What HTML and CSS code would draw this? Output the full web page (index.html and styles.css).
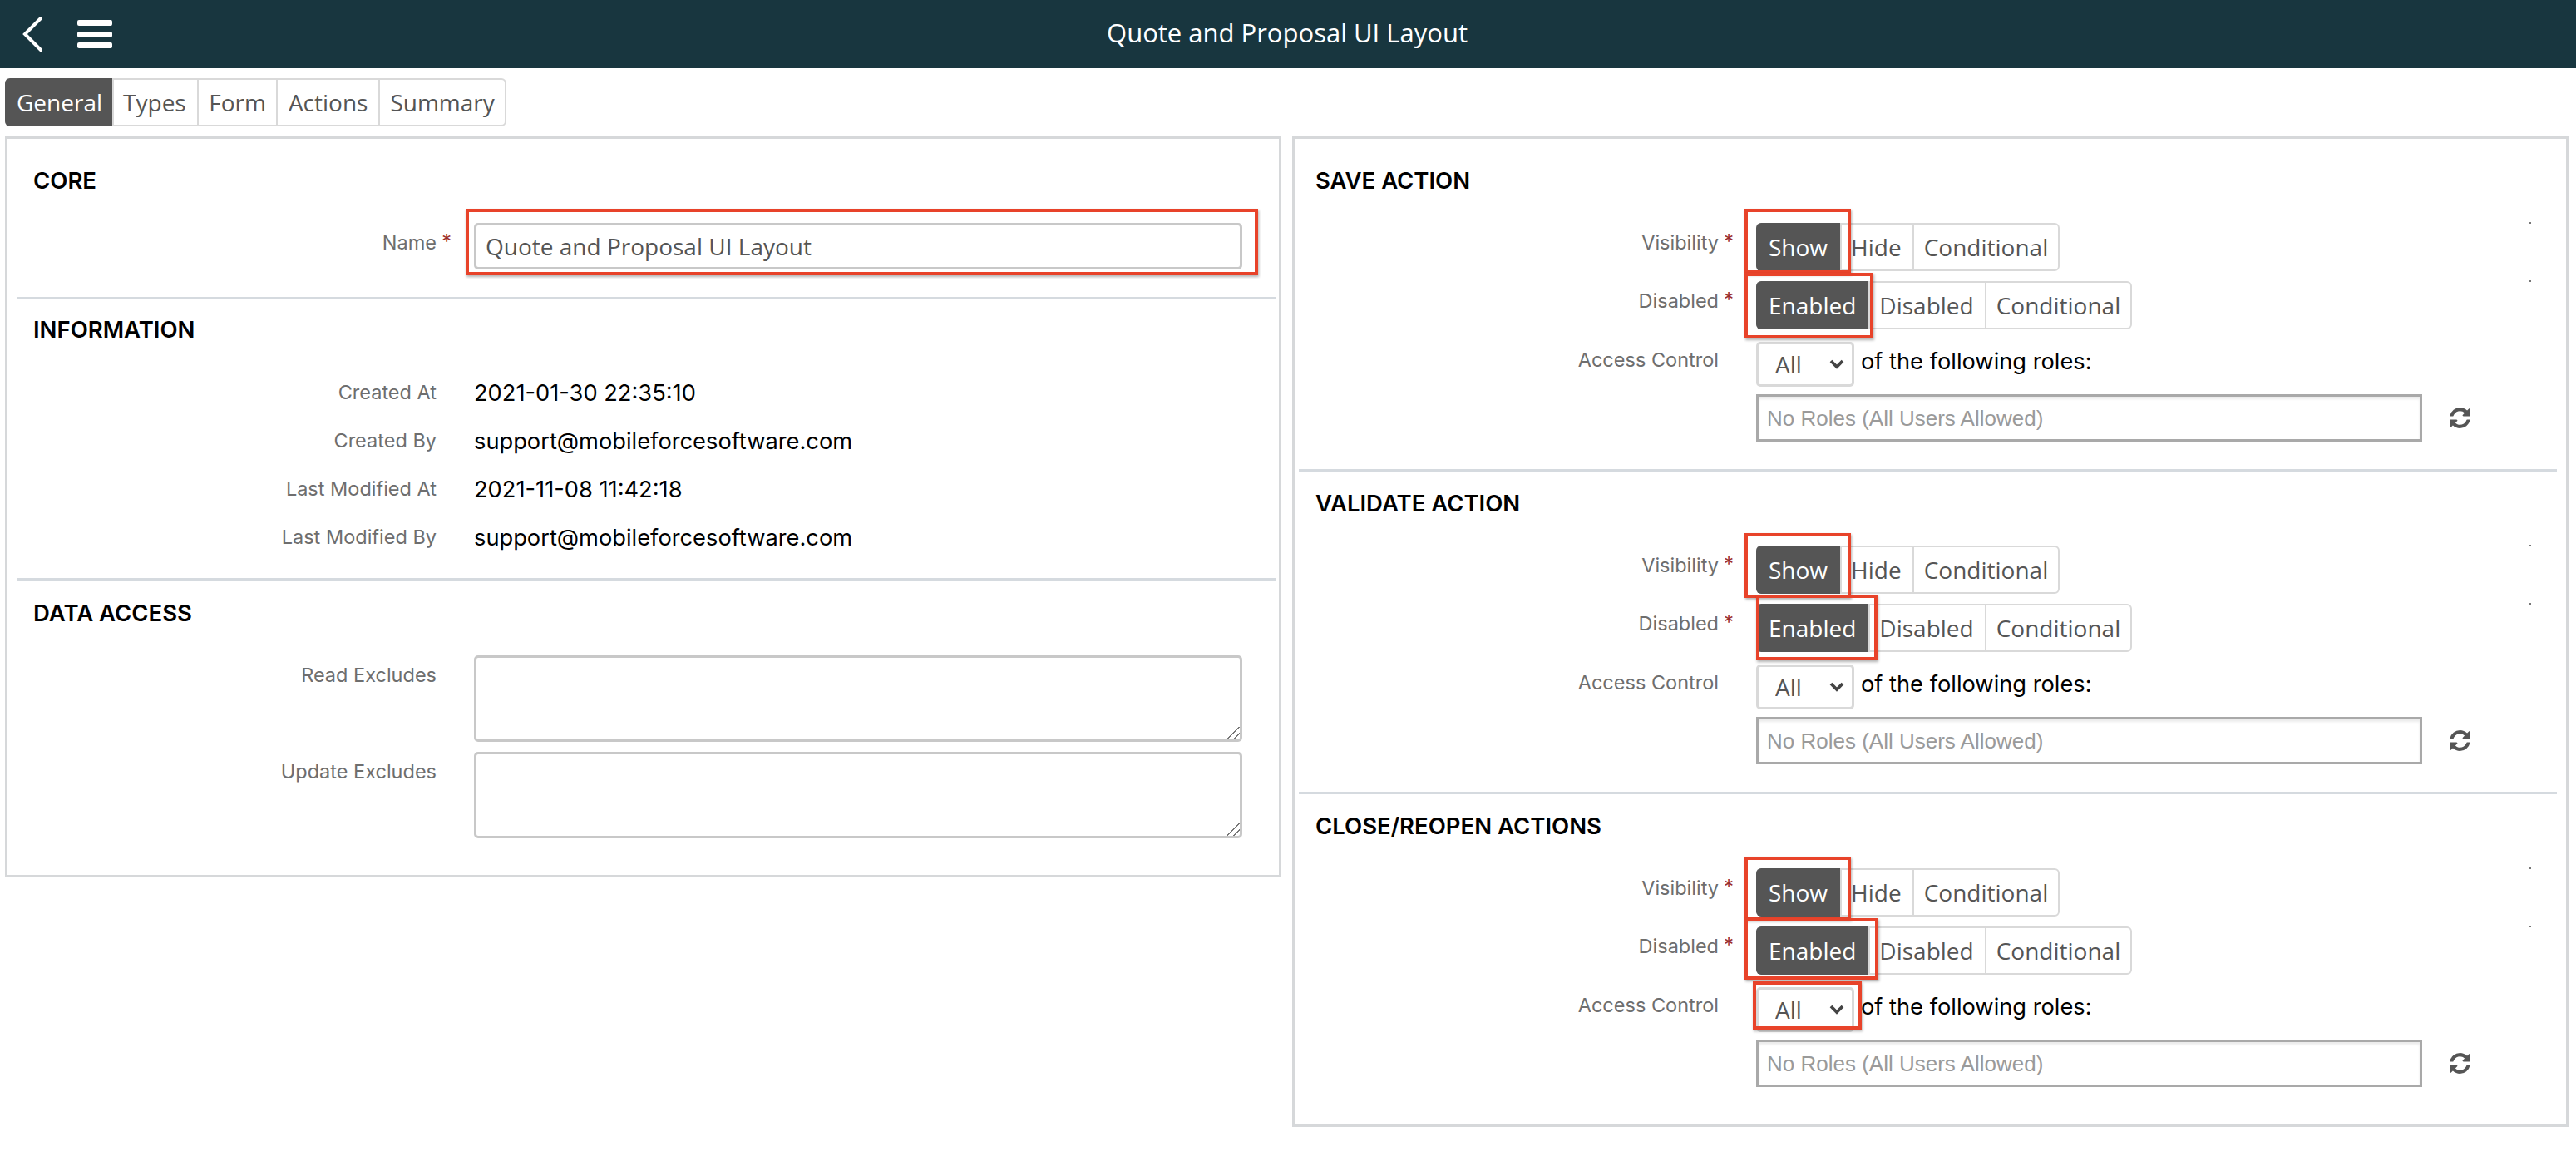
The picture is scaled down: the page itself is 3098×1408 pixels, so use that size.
FILE: index.html
```html
<!DOCTYPE html>
<html lang="en">
<head>
    <meta charset="UTF-8">
    <meta name="viewport" content="width=device-width, initial-scale=1.0">
    <title>Quote and Proposal UI Layout</title>
    <link rel="stylesheet" href="styles.css">
</head>
<body>
    <header class="topbar">
        <svg class="back-icon" viewBox="0 0 28 44"><path d="M24 3 5 22l19 19"/></svg>
        <div class="menu-icon"><span></span><span></span><span></span></div>
        <h1>Quote and Proposal UI Layout</h1>
    </header>

    <nav class="seg tabs">
        <a class="active">General</a>
        <a>Types</a>
        <a>Form</a>
        <a>Actions</a>
        <a>Summary</a>
    </nav>

    <main class="columns">
        <div class="panel panel-left">
            <section class="block block-core">
                <h2>CORE</h2>
                <div class="row">
                    <label>Name <i class="req">*</i></label>
                    <input class="text-input" type="text" value="Quote and Proposal UI Layout">
                </div>
            </section>
            <section class="block block-info">
                <h2>INFORMATION</h2>
                <div class="info-row"><label>Created At</label><span>2021-01-30 22:35:10</span></div>
                <div class="info-row"><label>Created By</label><span>support@mobileforcesoftware.com</span></div>
                <div class="info-row"><label>Last Modified At</label><span>2021-11-08 11:42:18</span></div>
                <div class="info-row"><label>Last Modified By</label><span>support@mobileforcesoftware.com</span></div>
            </section>
            <section class="block block-data">
                <h2>DATA ACCESS</h2>
                <div class="row area-row">
                    <label>Read Excludes</label>
                    <textarea></textarea>
                </div>
                <div class="row area-row">
                    <label>Update Excludes</label>
                    <textarea></textarea>
                </div>
            </section>
        </div>

        <div class="panel panel-right">
            <section class="block action">
                <h2>SAVE ACTION</h2>
                <div class="row toggle-row">
                    <label>Visibility <i class="req">*</i></label>
                    <div class="seg"><a class="active">Show</a><a>Hide</a><a>Conditional</a></div>
                    <span class="tick"></span>
                </div>
                <div class="row toggle-row">
                    <label>Disabled <i class="req">*</i></label>
                    <div class="seg"><a class="active">Enabled</a><a>Disabled</a><a>Conditional</a></div>
                    <span class="tick"></span>
                </div>
                <div class="row access-row">
                    <label>Access Control</label>
                    <select class="picker"><option>All</option></select>
                    <span class="roles-text">of the following roles:</span>
                </div>
                <div class="row roles-row">
                    <input class="roles-input" type="text" placeholder="No Roles (All Users Allowed)">
                    <svg class="refresh" viewBox="0 0 1792 1792"><path d="M1639 1056q0 5-1 7-64 268-268 434.5t-478 166.5q-146 0-282.5-55t-243.5-157l-129 129q-19 19-45 19t-45-19-19-45v-448q0-26 19-45t45-19h448q26 0 45 19t19 45-19 45l-137 137q71 66 161 102t187 36q134 0 250-65t186-179q11-17 53-117 8-23 30-23h192q13 0 22.5 9.5t9.5 22.5zm25-800v448q0 26-19 45t-45 19h-448q-26 0-45-19t-19-45 19-45l138-138q-148-137-349-137-134 0-250 65t-186 179q-11 17-53 117-8 23-30 23h-199q-13 0-22.5-9.5t-9.5-22.5v-7q65-268 270-434.5t480-166.5q146 0 284 55.5t245 156.5l130-129q19-19 45-19t45 19 19 45z"/></svg>
                </div>
            </section>
            <section class="block action">
                <h2>VALIDATE ACTION</h2>
                <div class="row toggle-row">
                    <label>Visibility <i class="req">*</i></label>
                    <div class="seg"><a class="active">Show</a><a>Hide</a><a>Conditional</a></div>
                    <span class="tick"></span>
                </div>
                <div class="row toggle-row">
                    <label>Disabled <i class="req">*</i></label>
                    <div class="seg"><a class="active">Enabled</a><a>Disabled</a><a>Conditional</a></div>
                    <span class="tick"></span>
                </div>
                <div class="row access-row">
                    <label>Access Control</label>
                    <select class="picker"><option>All</option></select>
                    <span class="roles-text">of the following roles:</span>
                </div>
                <div class="row roles-row">
                    <input class="roles-input" type="text" placeholder="No Roles (All Users Allowed)">
                    <svg class="refresh" viewBox="0 0 1792 1792"><path d="M1639 1056q0 5-1 7-64 268-268 434.5t-478 166.5q-146 0-282.5-55t-243.5-157l-129 129q-19 19-45 19t-45-19-19-45v-448q0-26 19-45t45-19h448q26 0 45 19t19 45-19 45l-137 137q71 66 161 102t187 36q134 0 250-65t186-179q11-17 53-117 8-23 30-23h192q13 0 22.5 9.5t9.5 22.5zm25-800v448q0 26-19 45t-45 19h-448q-26 0-45-19t-19-45 19-45l138-138q-148-137-349-137-134 0-250 65t-186 179q-11 17-53 117-8 23-30 23h-199q-13 0-22.5-9.5t-9.5-22.5v-7q65-268 270-434.5t480-166.5q146 0 284 55.5t245 156.5l130-129q19-19 45-19t45 19 19 45z"/></svg>
                </div>
            </section>
            <section class="block action">
                <h2>CLOSE/REOPEN ACTIONS</h2>
                <div class="row toggle-row">
                    <label>Visibility <i class="req">*</i></label>
                    <div class="seg"><a class="active">Show</a><a>Hide</a><a>Conditional</a></div>
                    <span class="tick"></span>
                </div>
                <div class="row toggle-row">
                    <label>Disabled <i class="req">*</i></label>
                    <div class="seg"><a class="active">Enabled</a><a>Disabled</a><a>Conditional</a></div>
                    <span class="tick"></span>
                </div>
                <div class="row access-row">
                    <label>Access Control</label>
                    <select class="picker"><option>All</option></select>
                    <span class="roles-text">of the following roles:</span>
                </div>
                <div class="row roles-row">
                    <input class="roles-input" type="text" placeholder="No Roles (All Users Allowed)">
                    <svg class="refresh" viewBox="0 0 1792 1792"><path d="M1639 1056q0 5-1 7-64 268-268 434.5t-478 166.5q-146 0-282.5-55t-243.5-157l-129 129q-19 19-45 19t-45-19-19-45v-448q0-26 19-45t45-19h448q26 0 45 19t19 45-19 45l-137 137q71 66 161 102t187 36q134 0 250-65t186-179q11-17 53-117 8-23 30-23h192q13 0 22.5 9.5t9.5 22.5zm25-800v448q0 26-19 45t-45 19h-448q-26 0-45-19t-19-45 19-45l138-138q-148-137-349-137-134 0-250 65t-186 179q-11 17-53 117-8 23-30 23h-199q-13 0-22.5-9.5t-9.5-22.5v-7q65-268 270-434.5t480-166.5q146 0 284 55.5t245 156.5l130-129q19-19 45-19t45 19 19 45z"/></svg>
                </div>
            </section>
        </div>
    </main>

    <!-- red boxes drawn on top of the screenshot -->
    <div class="mark mark-name"></div>
    <div class="mark mark-show1"></div>
    <div class="mark mark-enabled1"></div>
    <div class="mark mark-show2"></div>
    <div class="mark mark-enabled2"></div>
    <div class="mark mark-show3"></div>
    <div class="mark mark-enabled3"></div>
    <div class="mark mark-select3"></div>
</body>
</html>
```

FILE: styles.css
```css
* {
    box-sizing: border-box;
}
body {
    position: relative;
    margin: 0;
    padding: 0 9px 0 6px;
    height: 1408px;
    overflow: hidden;
    background-color: #fff;
    font-family: Inter, "Liberation Sans", sans-serif;
    color: #000;
}
.topbar {
    display: flex;
    align-items: center;
    height: 82px;
    margin: 0 -9px 0 -6px;
    padding-left: 25px;
    background-color: #18363f;
}
.topbar h1 {
    flex: 1;
    margin: 0 0 0 -137px;
    padding-bottom: 5px;
    text-align: center;
    font-family: "Open Sans", sans-serif;
    font-size: 31px;
    font-weight: 400;
    color: #fff;
}
.back-icon {
    width: 28px;
    height: 44px;
    fill: none;
    stroke: #fff;
    stroke-width: 4;
    stroke-linecap: round;
}
.menu-icon {
    display: flex;
    flex-direction: column;
    justify-content: space-between;
    width: 42px;
    height: 34px;
    margin-left: 40px;
}
.menu-icon span {
    height: 7px;
    border-radius: 2px;
    background-color: #fff;
}

/* segmented buttons, used for the tabs too */
.seg {
    display: inline-flex;
    height: 58px;
    border: 2px solid #d9d9d9;
    border-radius: 6px;
    background-color: #fff;
    font-family: "Open Sans", sans-serif;
    font-size: 28px;
    color: #555;
}
.seg a {
    display: flex;
    align-items: center;
    padding: 0 12px;
    border-left: 2px solid #d9d9d9;
    white-space: nowrap;
}
.seg a:first-child {
    border-left: none;
}
.seg a.active {
    margin: -2px 0 -2px -2px;
    padding: 0 15px;
    background-color: #555;
    border-radius: 6px 0 0 6px;
    color: #fff;
}
.seg a.active + a {
    padding: 0 13px 0 11px;
}
.tabs {
    display: flex;
    width: fit-content;
    margin-top: 12px;
}
.tabs a {
    padding: 0 12.5px;
}
.tabs a.active {
    padding: 0 12px 0 14px;
}
.columns {
    display: flex;
    align-items: flex-start;
    gap: 13px;
    margin-top: 12px;
}
.panel {
    border: 3px solid #d6d8da;
}
.panel-left {
    width: 1535px;
    height: 891px;
    padding: 13px 0 0 11px;
}
.panel-right {
    width: 1535px;
    height: 1191px;
    padding: 13px 11px 0 5px;
}
.block {
    padding: 16px 0 0 20px;
    border-bottom: 3px solid #d5dadf;
}
.block:last-child {
    border-bottom: none;
}
.panel-left .block {
    margin-right: 3px;
}
h2 {
    height: 40px;
    margin: 0;
    font-size: 27.5px;
    font-weight: 600;
    line-height: 43px;
}
.row {
    display: flex;
    align-items: flex-start;
}
label {
    flex: none;
    width: 502px;
    margin-right: 28px;
    padding-top: 8px;
    padding-right: 17px;
    position: relative;
    text-align: right;
    font-size: 23.5px;
    line-height: 32px;
    color: #6e6e6e;
}
.req {
    position: absolute;
    right: -1px;
    top: 6px;
    font-style: normal;
    color: #9b2d2d;
}
.text-input {
    width: 924px;
    height: 56px;
    padding: 0 11px;
    border: 3px solid #c8c8c8;
    border-radius: 5px;
    font-family: "Open Sans", sans-serif;
    font-size: 28px;
    color: #555;
}
.block-core {
    height: 180px;
}
.block-core h2 {
    margin-bottom: 32px;
}
.block-info {
    height: 338px;
    padding-top: 15px;
}
.block-info h2 {
    margin-bottom: 28px;
}
.info-row {
    display: flex;
    height: 58px;
    align-items: center;
}
.info-row label {
    padding-top: 0;
}
.info-row span {
    font-size: 27.25px;
}
.block-data {
    padding-top: 18px;
}
.block-data h2 {
    margin-bottom: 32px;
}
.area-row {
    margin-bottom: 12px;
}
textarea {
    width: 924px;
    height: 104px;
    padding: 10px;
    border: 3px solid #c8c8c8;
    border-radius: 5px;
}
textarea::-webkit-resizer {
    background: linear-gradient(135deg, transparent 45%, #777 45% 52%, transparent 52% 72%, #777 72% 79%, transparent 79%);
}
.action {
    height: 388px;
    padding-top: 17px;
}
.action h2 {
    margin-bottom: 32px;
}
.action:first-child {
    height: 387px;
    padding-top: 16px;
}
.toggle-row {
    position: relative;
    margin-bottom: 12px;
}
.tick {
    position: absolute;
    right: 31px;
    top: -1px;
    width: 2px;
    height: 2px;
    background-color: #777;
}
.access-row {
    height: 54px;
    margin-top: 15px;
    margin-bottom: 9px;
}
.access-row label {
    padding-top: 6px;
}
.picker {
    width: 118px;
    height: 54px;
    padding-left: 20px;
    appearance: none;
    border: 3px solid #d9d9d9;
    border-radius: 5px;
    background: #fff url("data:image/svg+xml,%3Csvg xmlns='http://www.w3.org/2000/svg' viewBox='0 0 18 12'%3E%3Cpath d='M2 2l7 7 7-7' fill='none' stroke='%23444' stroke-width='3.8'/%3E%3C/svg%3E") no-repeat right 9px center / 18px 12px;
    font-family: "Open Sans", sans-serif;
    font-size: 28px;
    color: #555;
}
.roles-text {
    margin-left: 8px;
    font-size: 27.25px;
    line-height: 48px;
}
.roles-row {
    align-items: center;
    padding-left: 530px;
}
.roles-input {
    width: 801px;
    height: 57px;
    padding: 2px 10px 0;
    border: 3px solid #a9a9a9;
    box-shadow: inset 0 3px 3px rgba(0, 0, 0, 0.08);
    font-family: "Liberation Sans", sans-serif;
    font-size: 26px;
}
.roles-input::placeholder {
    color: #9a9a9a;
    opacity: 1;
}
.refresh {
    width: 29px;
    height: 29px;
    margin-left: 31px;
    fill: #555;
}

/* annotations */
.mark {
    position: absolute;
    border: 4px solid #e8432a;
    box-shadow: 1px 2px 3px rgba(0, 0, 0, 0.3);
}
.mark-name { left: 560px; top: 251px; width: 953px; height: 80px; }
.mark-show1 { left: 2098px; top: 251px; width: 128px; height: 78px; }
.mark-enabled1 { left: 2098px; top: 328px; width: 155px; height: 79px; }
.mark-show2 { left: 2098px; top: 641px; width: 128px; height: 78px; }
.mark-enabled2 { left: 2112px; top: 715px; width: 146px; height: 79px; }
.mark-show3 { left: 2098px; top: 1030px; width: 128px; height: 76px; }
.mark-enabled3 { left: 2098px; top: 1104px; width: 161px; height: 74px; }
.mark-select3 { left: 2108px; top: 1180px; width: 131px; height: 58px; }
```
